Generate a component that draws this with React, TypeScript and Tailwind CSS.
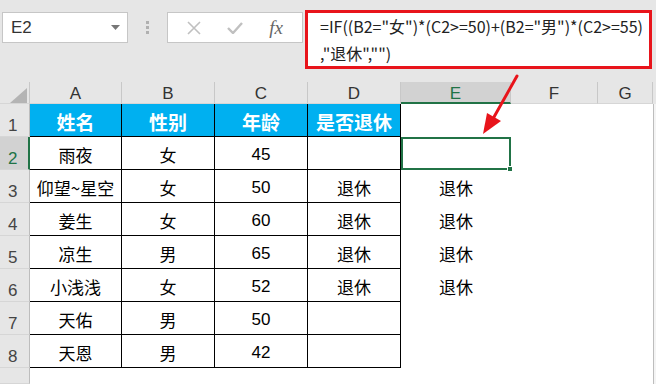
import React from 'react'

type Row = { n: number; a: string; b: string; c: string; d: string; e: string }

const ROWS: Row[] = [
  { n: 2, a: '雨夜', b: '女', c: '45', d: '', e: '' },
  { n: 3, a: '仰望~星空', b: '女', c: '50', d: '退休', e: '退休' },
  { n: 4, a: '姜生', b: '女', c: '60', d: '退休', e: '退休' },
  { n: 5, a: '凉生', b: '男', c: '65', d: '退休', e: '退休' },
  { n: 6, a: '小浅浅', b: '女', c: '52', d: '退休', e: '退休' },
  { n: 7, a: '天佑', b: '男', c: '50', d: '', e: '' },
  { n: 8, a: '天恩', b: '男', c: '42', d: '', e: '' },
]

const COLS = ['A', 'B', 'C', 'D', 'E', 'F', 'G']

const cjk = "font-['Noto_Sans_CJK_SC',sans-serif]"
const sans = "font-['Liberation_Sans','Noto_Sans_CJK_SC',sans-serif]"

function RowHead({ n, active }: { n: number | string; active?: boolean }) {
  return (
    <div
      className={`flex items-end pl-[8px] pb-[2px] text-[17px] leading-none ${sans} border-b border-[#d6d6d6] ${
        active ? 'bg-[#d2d2d2] text-[#217346] border-r-2 border-r-[#217346]' : 'bg-[#e6e6e6] text-[#444] border-r border-r-[#bdbdbd]'
      }`}
    >
      {n}
    </div>
  )
}

function TCell({ children, font = cjk }: { children?: React.ReactNode; font?: string }) {
  return (
    <div className={`flex items-center justify-center pt-[2px] bg-white border-r border-b border-black text-[17px] text-black leading-none ${font}`}>
      {children}
    </div>
  )
}

function Toolbar() {
  return (
    <div className="flex items-start h-[82px] pt-[10px] pl-[2px]">
      <div className="mt-[2px] w-[126px] h-[31px] bg-white border border-[#c6c6c6] flex items-center justify-between pl-[8px] pr-[7px]">
        <span className={`text-[17px] text-[#333] ${sans}`}>E2</span>
        <svg width="9" height="6" viewBox="0 0 9 6">
          <path d="M0 0 L9 0 L4.5 5 Z" fill="#777" />
        </svg>
      </div>
      <div className="mt-[2px] w-[39px] h-[31px] flex flex-col items-center justify-center gap-[2px]">
        <div className="w-[3px] h-[3px] bg-[#b0b0b0]" />
        <div className="w-[3px] h-[3px] bg-[#b0b0b0]" />
        <div className="w-[3px] h-[3px] bg-[#b0b0b0]" />
      </div>
      <div className="mt-[2px] w-[136px] h-[31px] bg-white border border-[#c6c6c6] flex items-center justify-around px-[6px]">
        <svg width="14" height="14" viewBox="0 0 14 14">
          <path d="M1 1 L13 13 M13 1 L1 13" stroke="#c0c0c0" strokeWidth="1.6" />
        </svg>
        <svg width="16" height="13" viewBox="0 0 16 13">
          <path d="M1 7 L6 12 L15 2" stroke="#c0c0c0" strokeWidth="2.4" fill="none" />
        </svg>
        <span className="text-[19px] italic text-[#666] font-['Liberation_Serif',serif] leading-none">fx</span>
      </div>
      <div
        className={`ml-[2px] w-[347px] h-[59px] bg-white border-[3px] border-[#e8141b] pl-[12px] text-[16px] leading-[27px] text-[#222] ${cjk}`}
      >
        <div className="whitespace-nowrap">=IF((B2="女")*(C2&gt;=50)+(B2="男")*(C2&gt;=55)</div>
        <div className="whitespace-nowrap">,"退休","")</div>
      </div>
    </div>
  )
}

export default function App() {
  return (
    <div className="relative w-[656px] h-[384px] overflow-hidden bg-[#e6e6e6]">
      <Toolbar />

      <div className="grid grid-cols-[30px_92px_93px_93px_93px_110px_87px_55px_3px] grid-rows-[22px_repeat(8,33px)_16px]">
        {/* column headers */}
        <div className="relative bg-[#e6e6e6] border-r border-[#c8c8c8] border-b border-b-[#d6d6d6]">
          <svg className="absolute left-[10px] top-[6px]" width="17" height="15" viewBox="0 0 17 15">
            <path d="M17 0 L17 15 L0 15 Z" fill="#b4b4b4" />
          </svg>
        </div>
        {COLS.map((c) =>
          c === 'E' ? (
            <div key={c} className={`flex items-center justify-center pt-[2px] bg-[#d2d2d2] text-[#217346] text-[17px] leading-none border-r border-[#c8c8c8] border-b-2 border-b-[#217346] ${sans}`}>
              {c}
            </div>
          ) : (
            <div key={c} className={`flex items-center justify-center pt-[2px] bg-[#e6e6e6] text-[#333] text-[17px] leading-none border-r border-[#c8c8c8] border-b border-b-[#d6d6d6] ${sans}`}>
              {c}
            </div>
          )
        )}
        <div className="bg-[#e6e6e6]" />

        {/* row 1 */}
        <RowHead n={1} />
        {['姓名', '性别', '年龄', '是否退休'].map((h) => (
          <div
            key={h}
            className={`flex items-center justify-center pt-[2px] bg-[#00b0f0] border-r border-b border-black text-white font-bold text-[19px] leading-none whitespace-nowrap ${cjk}`}
          >
            {h}
          </div>
        ))}
        <div className="bg-white" />
        <div className="bg-white" />
        <div className="bg-white" />
        <div className="bg-[#f4f4f4] border-l border-[#bdbdbd]" />

        {ROWS.map((r) => (
          <React.Fragment key={r.n}>
            <RowHead n={r.n} active={r.n === 2} />
            <TCell>{r.a}</TCell>
            <TCell>{r.b}</TCell>
            <TCell font={sans}>{r.c}</TCell>
            <TCell>{r.d}</TCell>
            {r.n === 2 ? (
              <div className="relative bg-white border-2 border-[#217346]">
                <div className="absolute -right-[4px] -bottom-[4px] w-[6px] h-[6px] bg-[#217346] border border-white" />
              </div>
            ) : (
              <div className={`flex items-center justify-center pt-[2px] bg-white text-[17px] text-black leading-none ${cjk}`}>{r.e}</div>
            )}
            <div className="bg-white" />
            <div className="bg-white" />
            <div className="bg-[#f4f4f4] border-l border-[#bdbdbd]" />
          </React.Fragment>
        ))}

        {/* row 9 (partly visible) */}
        <RowHead n="" />
        <div className="bg-white col-span-7" />
        <div className="bg-[#f4f4f4] border-l border-[#bdbdbd]" />
      </div>

      {/* annotation arrow */}
      <svg className="absolute left-0 top-0 pointer-events-none" width="656" height="384" viewBox="0 0 656 384">
        <line x1="517" y1="76" x2="494" y2="117" stroke="#e8141b" strokeWidth="3" strokeLinecap="round" />
        <path d="M483 134 L487 113 L501 121 Z" fill="#e8141b" />
      </svg>
    </div>
  )
}
